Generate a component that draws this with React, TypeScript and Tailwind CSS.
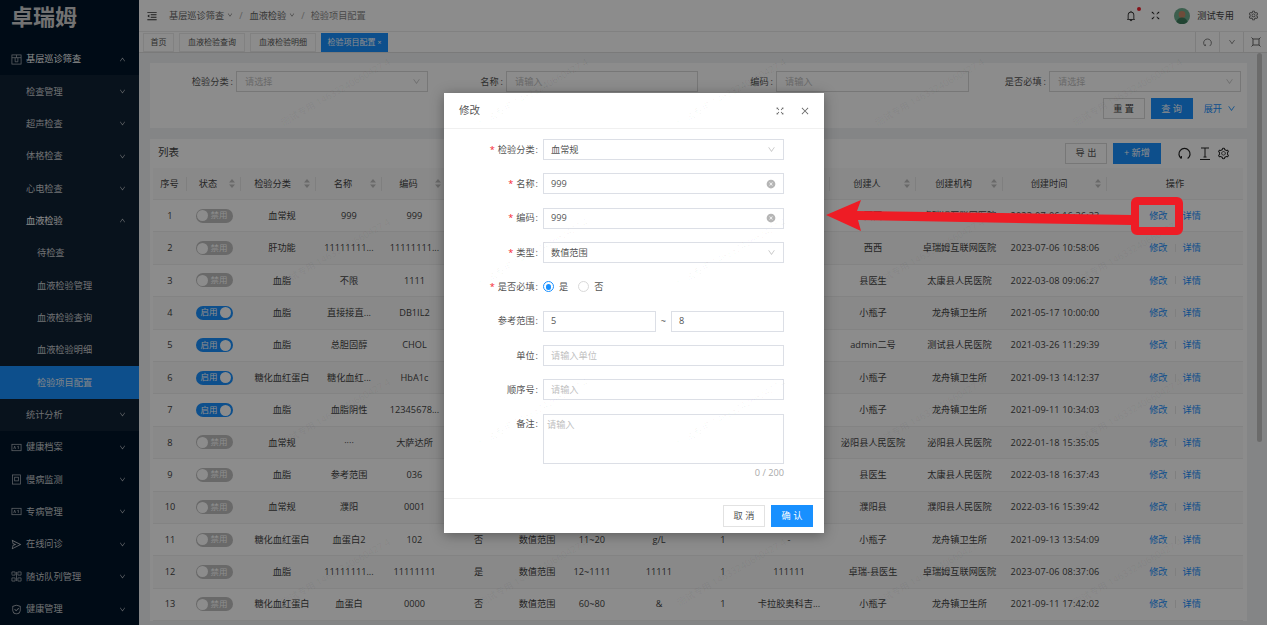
import React from "react";
import {
  AiOutlineBell,
  AiOutlineClose,
  AiOutlineDown,
  AiOutlineFullscreen,
  AiOutlineMenuFold,
  AiOutlineSafety,
  AiOutlineSend,
  AiOutlineSetting,
  AiOutlineUp,
  AiFillCloseCircle,
} from "react-icons/ai";

const rows: { on: boolean; c: string[] }[] = [
  { on: false, c: ["血常规", "999", "999", "是", "数值范围", "5~8", "", "1", "-", "西西", "卓瑞姆互联网医院", "2023-07-06 16:36:33"] },
  { on: false, c: ["肝功能", "11111111...", "11111111...", "是", "数值范围", "1~2", "", "1", "-", "西西", "卓瑞姆互联网医院", "2023-07-06 10:58:06"] },
  { on: false, c: ["血脂", "不限", "1111", "否", "不限", "-", "", "1", "-", "县医生", "太康县人民医院", "2022-03-08 09:06:27"] },
  { on: true, c: ["血脂", "直接接直...", "DB1IL2", "否", "数值范围", "1~2", "", "1", "-", "小瓶子", "龙舟镇卫生所", "2021-05-17 10:00:00"] },
  { on: true, c: ["血脂", "总胆固醇", "CHOL", "否", "数值范围", "1~2", "", "1", "-", "admin二号", "测试县人民医院", "2021-03-26 11:29:39"] },
  { on: true, c: ["糖化血红蛋白", "糖化血红...", "HbA1c", "否", "数值范围", "1~2", "", "1", "-", "小瓶子", "龙舟镇卫生所", "2021-09-13 14:12:37"] },
  { on: true, c: ["血脂", "血脂阴性", "12345678...", "否", "数值范围", "1~2", "", "1", "-", "小瓶子", "龙舟镇卫生所", "2021-09-11 10:34:03"] },
  { on: false, c: ["血常规", "····", "大萨达所", "否", "数值范围", "1~2", "", "1", "-", "泌阳县人民医院", "泌阳县人民医院", "2022-01-18 15:35:05"] },
  { on: false, c: ["血脂", "参考范围", "036", "否", "数值范围", "1~2", "", "1", "-", "县医生", "太康县人民医院", "2022-03-18 16:37:43"] },
  { on: false, c: ["血常规", "濮阳", "0001", "否", "数值范围", "1~2", "", "1", "-", "濮阳县", "濮阳县人民医院", "2022-03-16 15:39:42"] },
  { on: false, c: ["糖化血红蛋白", "血蛋白2", "102", "否", "数值范围", "11~20", "g/L", "1", "-", "小瓶子", "龙舟镇卫生所", "2021-09-13 13:54:09"] },
  { on: false, c: ["血脂", "11111111...", "11111111", "是", "数值范围", "12~1111", "11111", "1", "111111", "卓瑞-县医生", "卓瑞姆互联网医院", "2023-07-06 08:37:06"] },
  { on: false, c: ["糖化血红蛋白", "血蛋白", "0000", "否", "数值范围", "60~80", "&", "1", "卡拉胶奥科吉...", "小瓶子", "龙舟镇卫生所", "2021-09-11 17:42:02"] },
];

const gridCols =
  "grid grid-cols-[34px_54px_75px_66px_65px_63px_54px_56px_78px_50px_82px_86px_87px_104px_136px]";

const headers = ["序号", "状态", "检验分类", "名称", "编码", "是否必填", "类型", "参考范围", "单位", "顺序号", "备注", "创建人", "创建机构", "创建时间", "操作"];
const unsorted = new Set(["序号", "操作"]);

function SortIcon() {
  return (
    <svg width="6" height="9" viewBox="0 0 6 9" className="mr-[5px] shrink-0" fill="#bfbfbf">
      <path d="M3 0 6 3.6H0z" />
      <path d="M3 9 0 5.4h6z" />
    </svg>
  );
}

function ReloadIcon({ size, color, className }: { size: number; color: string; className?: string }) {
  return (
    <svg width={size} height={size} viewBox="0 0 14 14" fill="none" stroke={color} strokeWidth="1.3" className={className}>
      <path d="M3.600 12.500A6 6 0 1 1 10.400 12.500M3.600 12.500V9.800" />
    </svg>
  );
}

function IconBox({ kind }: { kind: string }) {
  const common = { width: 11, height: 11, viewBox: "0 0 12 12", fill: "none", stroke: "#b5bac0", strokeWidth: 0.8 };
  if (kind === "grid")
    return (
      <svg {...common}>
        <rect x="1" y="1" width="10" height="10" />
        <path d="M1 4h10M4.500 4v4.500h3V4M6 1v3" />
      </svg>
    );
  if (kind === "card")
    return (
      <svg {...common} height={9} viewBox="0 0 12 9">
        <rect x="1" y="1" width="10" height="7" />
        <path d="M3 6l1-3 1 3M7 3.500 8 3v3" />
      </svg>
    );
  if (kind === "square")
    return (
      <svg {...common}>
        <rect x="1.500" y="1" width="9" height="10" />
        <rect x="4" y="3.500" width="4" height="4" />
      </svg>
    );
  if (kind === "queue")
    return (
      <svg {...common}>
        <path d="M1 4V1h3.500v3.500H1M7.500 1H11v3.500H7.500zM1 7.500h3.500V11H1zM7.500 7.500H11V11H7.500zM6 1v10" />
      </svg>
    );
  if (kind === "send") return <AiOutlineSend size={11} color="#b5bac0" />;
  return <AiOutlineSafety size={11} color="#b5bac0" />;
}

function MenuItem({
  label,
  icon,
  level,
  open,
  active,
  chevron = true,
  bright,
}: {
  label: string;
  icon?: string;
  level: 0 | 1 | 2;
  open?: boolean;
  active?: boolean;
  chevron?: boolean;
  bright?: boolean;
}) {
  const pad = level === 2 ? "pl-[37px]" : level === 1 ? "pl-[26px]" : "pl-[11px]";
  return (
    <div
      className={`flex h-[32.35px] items-center pr-[13px] text-[9.2px] ${pad} ${
        active ? "bg-[#1890ff] text-[#e6f0fa]" : bright ? "text-[#ffffff]" : "text-[#c9ccd0]"
      }`}
    >
      {icon && (
        <span className="mr-[4px] flex w-[11px] justify-center">
          <IconBox kind={icon} />
        </span>
      )}
      <span className="flex-1">{label}</span>
      {chevron &&
        (open ? <AiOutlineUp size={7} color="#c9ccd0" /> : <AiOutlineDown size={7} color="#c9ccd0" />)}
    </div>
  );
}

function Sidebar() {
  return (
    <aside className="h-[625px] w-[139px] shrink-0 overflow-hidden bg-[#001529]">
      <div className="flex h-[43px] items-start pl-[11px] text-[22px] font-bold leading-[32px] text-[#d0d0d0]">卓瑞姆</div>
      <MenuItem label="基层巡诊筛查" icon="grid" level={0} open bright />
      <div className="bg-[#0f2133]">
        <MenuItem label="检查管理" level={1} />
        <MenuItem label="超声检查" level={1} />
        <MenuItem label="体格检查" level={1} />
        <MenuItem label="心电检查" level={1} />
        <MenuItem label="血液检验" level={1} open bright />
        <MenuItem label="待检查" level={2} chevron={false} />
        <MenuItem label="血液检验管理" level={2} chevron={false} />
        <MenuItem label="血液检验查询" level={2} chevron={false} />
        <MenuItem label="血液检验明细" level={2} chevron={false} />
        <MenuItem label="检验项目配置" level={2} chevron={false} active />
        <MenuItem label="统计分析" level={1} />
      </div>
      <MenuItem label="健康档案" icon="card" level={0} />
      <MenuItem label="慢病监测" icon="square" level={0} />
      <MenuItem label="专病管理" icon="card" level={0} />
      <MenuItem label="在线问诊" icon="send" level={0} />
      <MenuItem label="随访队列管理" icon="queue" level={0} />
      <MenuItem label="健康管理" icon="shield" level={0} />
    </aside>
  );
}

function TopBar() {
  return (
    <header className="flex h-[32px] items-center border-b border-[#ececec] bg-white pl-[7px] text-[#555]">
      <AiOutlineMenuFold size={12} color="#333" />
      <div className="ml-[11px] flex items-center text-[9.2px] text-[#666]">
        <span>基层巡诊筛查</span>
        <AiOutlineDown size={6} className="ml-[3px]" />
        <span className="ml-[6px] mr-[7px] text-[#aaa]">/</span>
        <span>血液检验</span>
        <AiOutlineDown size={6} className="ml-[3px]" />
        <span className="ml-[6px] mr-[6px] text-[#aaa]">/</span>
        <span className="text-[#888]">检验项目配置</span>
      </div>
      <div className="ml-auto flex items-center">
        <span className="relative flex">
          <AiOutlineBell size={12} color="#222" />
          <span className="absolute right-[-4px] top-[-3px] h-[4px] w-[4px] rounded-full bg-[#f5222d]" />
        </span>
        <AiOutlineFullscreen size={11} color="#222" className="ml-[13px]" />
        <svg width="16" height="16" viewBox="0 0 16 16" className="ml-[13px]">
          <circle cx="8" cy="8" r="8" fill="#6fae8f" />
          <circle cx="8" cy="6.500" r="3.400" fill="#c98a6a" />
          <path d="M2.500 14c1-3.500 3-4.500 5.500-4.500s4.500 1 5.500 4.500a8 8 0 0 1-11 0z" fill="#3f7d5e" />
        </svg>
        <span className="ml-[7px] text-[9.2px] text-[#444]">测试专用</span>
        <AiOutlineSetting size={11} color="#555" className="ml-[14px] mr-[8px]" />
      </div>
    </header>
  );
}

function TabBar() {
  const Tab = ({ label, className }: { label: string; className: string }) => (
    <div className={`flex h-[19px] items-center justify-center border border-[#ececec] text-[8px] text-[#555] ${className}`}>{label}</div>
  );
  const Ctrl = ({ children }: { children: React.ReactNode }) => (
    <div className="flex h-[20px] w-[24px] items-center justify-center border-l border-[#e4e4e4] text-[#777]">{children}</div>
  );
  return (
    <div className="flex h-[21px] items-center border-b border-[#dedede] bg-white pl-[4px]">
      <Tab label="首页" className="w-[31px]" />
      <Tab label="血液检验查询" className="ml-[5px] w-[66px]" />
      <Tab label="血液检验明细" className="ml-[5px] w-[66px]" />
      <div className="ml-[5px] flex h-[19px] w-[67px] items-center justify-center bg-[#1890ff] text-[8px] text-white">
        检验项目配置<span className="ml-[2px] text-[7px] leading-none">×</span>
      </div>
      <div className="ml-auto flex">
        <Ctrl><ReloadIcon size={9} color="#666" /></Ctrl>
        <Ctrl><AiOutlineDown size={8} /></Ctrl>
        <Ctrl>
          <svg width="10" height="10" viewBox="0 0 10 10" fill="none" stroke="#666" strokeWidth="1">
            <path d="M2 2h6v6H2zM0.500 0.500 2 2M9.500 0.500 8 2M0.500 9.500 2 8M9.500 9.500 8 8" />
          </svg>
        </Ctrl>
      </div>
    </div>
  );
}

function Label({ text, className }: { text: string; className: string }) {
  return (
    <span className={`text-right text-[9.2px] text-[#555] ${className}`}>
      {text}
      <span className="ml-[2px]">:</span>
    </span>
  );
}

function SearchSelect({ width, labelW, label }: { width: string; labelW: string; label: string }) {
  return (
    <div className={`flex items-center ${width}`}>
      <Label text={label} className={labelW} />
      <div className="ml-[3px] flex h-[21px] w-[192px] items-center justify-between border border-[#d9d9d9] pl-[8px] pr-[6px] text-[9.2px] text-[#bfbfbf]">
        请选择
        <AiOutlineDown size={9} color="#c4c4c4" />
      </div>
    </div>
  );
}

function SearchInput({ width, label }: { width: string; label: string }) {
  return (
    <div className={`flex items-center ${width}`}>
      <Label text={label} className="w-[75px]" />
      <div className="ml-[3px] flex h-[21px] flex-1 items-center border border-[#d9d9d9] px-[8px] text-[9.2px] text-[#bfbfbf]">请输入</div>
    </div>
  );
}

function SearchPanel() {
  return (
    <section className="h-[65px] bg-white pt-[8px]">
      <div className="flex">
        <SearchSelect width="w-[278px]" labelW="w-[83px]" label="检验分类" />
        <SearchInput width="w-[270px]" label="名称" />
        <SearchInput width="w-[271px]" label="编码" />
        <SearchSelect width="w-[272px]" labelW="w-[77px]" label="是否必填" />
      </div>
      <div className="mr-[11px] mt-[6px] flex items-center justify-end">
        <div className="flex h-[21px] w-[42px] items-center justify-center border border-[#d9d9d9] text-[9.2px] text-[#444]">重 置</div>
        <div className="ml-[6px] flex h-[21px] w-[42px] items-center justify-center bg-[#1890ff] text-[9.2px] text-white">查 询</div>
        <span className="ml-[11px] flex items-center text-[9.2px] text-[#1890ff]">
          展开
          <AiOutlineDown size={9} className="ml-[5px]" />
        </span>
      </div>
    </section>
  );
}

function Switch({ on }: { on: boolean }) {
  return on ? (
    <div className="flex h-[14px] w-[37px] items-center justify-between rounded-full bg-[#1890ff] pl-[5px] pr-[1.500px] text-[8.500px] text-white">
      启用
      <span className="h-[11px] w-[11px] rounded-full bg-white" />
    </div>
  ) : (
    <div className="flex h-[14px] w-[37px] items-center justify-between rounded-full bg-[#bfbfbf] pl-[1.500px] pr-[5px] text-[8.500px] text-white">
      <span className="h-[11px] w-[11px] rounded-full bg-white" />
      禁用
    </div>
  );
}

function ListPanel() {
  return (
    <section className="mt-[11px] bg-white">
      <div className="flex h-[28px] items-center pl-[8px] pr-[17px]">
        <span className="text-[10.500px] text-[#444]">列表</span>
        <div className="ml-auto flex items-center">
          <div className="flex h-[21px] w-[42px] items-center justify-center border border-[#d9d9d9] text-[9.2px] text-[#555]">导 出</div>
          <div className="ml-[6px] flex h-[21px] w-[48px] items-center justify-center bg-[#1890ff] text-[9.2px] text-white">+ 新增</div>
          <ReloadIcon size={13} color="#222" className="ml-[17px]" />
          <svg width="12" height="13" viewBox="0 0 12 13" className="ml-[8px]" fill="none" stroke="#222" strokeWidth="1">
            <path d="M2 1h8M6 1v9M4.500 10h3M1 12.500h10" />
          </svg>
          <AiOutlineSetting size={13} color="#222" className="ml-[6px]" />
        </div>
      </div>
      <div className="ml-[3px] mr-[4px] pt-[1px]">
        <div className={`${gridCols} h-[32px] items-center border-b border-[#efefef] bg-[#fafafa] text-[9.2px] text-[#444]`}>
          {headers.map((h, i) => (
            <div key={h} className={`flex h-[14px] items-center ${i < 14 ? "border-r border-[#e8e8e8]" : ""}`}>
              <span className="flex-1 text-center">{h}</span>
              {!unsorted.has(h) && <SortIcon />}
            </div>
          ))}
        </div>
        {rows.map((r, i) => (
          <div
            key={i}
            className={`${gridCols} h-[32.4px] items-center border-b border-[#efefef] text-center text-[9.2px] text-[#444] ${i % 2 === 1 ? "bg-[#fafafa]" : "bg-white"}`}
          >
            <span>{i + 1}</span>
            <span className="flex justify-center"><Switch on={r.on} /></span>
            {r.c.map((v, j) => (
              <span key={j} className={`whitespace-nowrap ${j === 0 ? "pl-[7px]" : ""} ${j === 11 ? "tracking-[0.12px]" : ""}`}>{v}</span>
            ))}
            <span className="flex items-center justify-center text-[#1890ff]">
              <span>修改</span>
              <span className="mx-[7px] h-[8px] w-px bg-[#e8e8e8]" />
              <span>详情</span>
            </span>
          </div>
        ))}
      </div>
    </section>
  );
}

function FormRow({ label, req, children, alignTop }: { label: string; req?: boolean; children: React.ReactNode; alignTop?: boolean }) {
  return (
    <div className={`flex ${alignTop ? "items-start" : "h-[21px] items-center"}`}>
      <span className={`w-[94px] shrink-0 text-right text-[9.2px] text-[#555] ${alignTop ? "pt-[3px]" : ""}`}>
        {req && <span className="mr-[3px] text-[#f5222d]">*</span>}
        {label}
        <span className="ml-[1px]">:</span>
      </span>
      <div className="ml-[5px] min-w-0 flex-1">{children}</div>
    </div>
  );
}

function Box({ children, className = "" }: { children?: React.ReactNode; className?: string }) {
  return (
    <div className={`flex h-[21px] items-center justify-between border border-[#dcdfe6] px-[7px] text-[9.2px] text-[#555] ${className}`}>
      {children}
    </div>
  );
}

function Modal() {
  return (
    <div className="absolute left-[444px] top-[93px] flex h-[440px] w-[380px] flex-col bg-white shadow-[0_2px_12px_rgba(0,0,0,0.35)]">
      <div className="flex h-[36px] items-center border-b border-[#f0f0f0] pl-[15px] pr-[14px] text-[#555]">
        <span className="text-[10.500px]">修改</span>
        <AiOutlineFullscreen size={10} className="ml-auto" color="#666" />
        <AiOutlineClose size={10} className="ml-[15px]" color="#666" />
      </div>
      <div className="flex flex-1 flex-col gap-[13.35px] pr-[40px] pt-[10px]">
        <FormRow label="检验分类" req>
          <Box>血常规<AiOutlineDown size={9} color="#c4c4c4" /></Box>
        </FormRow>
        <FormRow label="名称" req>
          <Box>999<AiFillCloseCircle size={10} color="#b5b5b5" /></Box>
        </FormRow>
        <FormRow label="编码" req>
          <Box>999<AiFillCloseCircle size={10} color="#b5b5b5" /></Box>
        </FormRow>
        <FormRow label="类型" req>
          <Box>数值范围<AiOutlineDown size={9} color="#c4c4c4" /></Box>
        </FormRow>
        <FormRow label="是否必填" req>
          <div className="flex items-center text-[9.2px] text-[#555]">
            <span className="flex h-[11px] w-[11px] items-center justify-center rounded-full border border-[#1890ff]">
              <span className="h-[5.500px] w-[5.500px] rounded-full bg-[#1890ff]" />
            </span>
            <span className="ml-[5px]">是</span>
            <span className="ml-[10px] h-[11px] w-[11px] rounded-full border border-[#d9d9d9]" />
            <span className="ml-[5px]">否</span>
          </div>
        </FormRow>
        <FormRow label="参考范围">
          <div className="flex items-center">
            <Box className="w-[113px]">5</Box>
            <span className="w-[15px] text-center text-[9.2px] text-[#555]">~</span>
            <Box className="w-[113px] border-[#c9d6e6]">8</Box>
          </div>
        </FormRow>
        <FormRow label="单位">
          <Box className="text-[#bfbfbf]">请输入单位</Box>
        </FormRow>
        <FormRow label="顺序号">
          <Box className="text-[#bfbfbf]">请输入</Box>
        </FormRow>
        <FormRow label="备注" alignTop>
          <div className="h-[50px] border border-[#dcdfe6] pl-[3px] pt-[3px] text-[9.2px] text-[#bfbfbf]">请输入</div>
          <div className="mt-[2px] text-right text-[9.2px] text-[#aaa]">0 / 200</div>
        </FormRow>
      </div>
      <div className="flex h-[35px] items-center justify-end gap-[6px] border-t border-[#f0f0f0] pr-[11px]">
        <div className="flex h-[22px] w-[42px] items-center justify-center border border-[#e2e2e2] text-[9.2px] text-[#555]">取 消</div>
        <div className="flex h-[22px] w-[42px] items-center justify-center bg-[#1890ff] text-[9.2px] text-white">确 认</div>
      </div>
    </div>
  );
}

function Watermarks({ className, xs, ys }: { className: string; xs: number[]; ys: number[] }) {
  return (
    <>
      {ys.flatMap((y) =>
        xs.map((x) => (
          <span
            key={`${x}-${y}`}
            className={`pointer-events-none absolute origin-bottom-left -rotate-[30deg] whitespace-nowrap text-[9.5px] leading-none ${className}`}
            style={{ left: x, top: y - 10 }}
          >
            测试专用 14633240660427 4
          </span>
        ))
      )}
    </>
  );
}

function Annotation() {
  return (
    <svg width="1267" height="625" viewBox="0 0 1267 625" className="pointer-events-none absolute left-0 top-0">
      <polygon points="826,215 861,200 857,211 1132,215 1132,225 858,220 861,231" fill="#ee1c25" />
      <rect x="1135" y="201" width="44" height="30" rx="2" fill="none" stroke="#ee1c25" strokeWidth="8" />
    </svg>
  );
}

export default function App() {
  const xs = [284, 482, 680, 878, 1076];
  const ys = [128, 288, 448, 608];
  return (
    <div className="relative flex h-[625px] w-[1267px] overflow-hidden bg-[#f0f2f5] font-['Open_Sans','Noto_Sans_CJK_SC',sans-serif]">
      <Sidebar />
      <main className="flex min-w-0 flex-1 flex-col overflow-hidden">
        <TopBar />
        <TabBar />
        <div className="flex min-h-0 flex-1">
          <div className="ml-[11px] w-[1097px] pt-[10px]">
            <SearchPanel />
            <ListPanel />
          </div>
          <div className="ml-[10px] h-[389px] w-[5px] rounded-full bg-[#c4c4c4]" />
        </div>
      </main>
      <Watermarks className="text-black/[0.06]" xs={xs} ys={ys} />
      <div className="absolute inset-0 bg-black/45" />
      <Modal />
      <Watermarks className="text-black/[0.04]" xs={[482, 680]} ys={[128, 288, 448]} />
      <Annotation />
    </div>
  );
}
